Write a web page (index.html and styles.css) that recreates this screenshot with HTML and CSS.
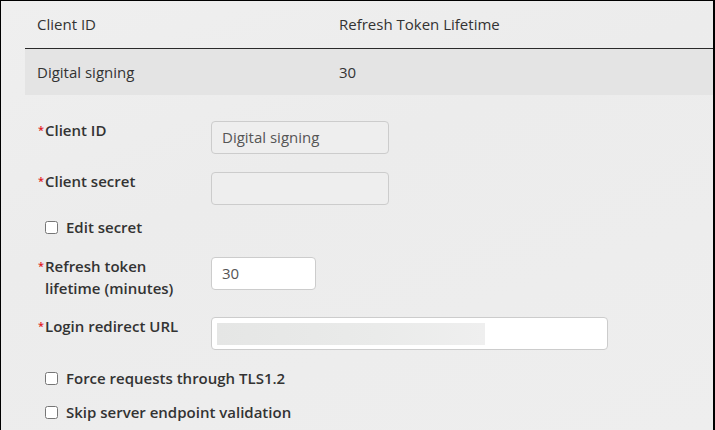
FILE: index.html
```
<!DOCTYPE html>
<html>
<head>
<meta charset="utf-8">
<link rel="stylesheet" href="styles.css">
</head>
<body>
<div class="frame">
  <div class="table">
    <div class="thead">
      <div class="col1">Client ID</div>
      <div class="col2">Refresh Token Lifetime</div>
    </div>
    <div class="trow">
      <div class="col1">Digital signing</div>
      <div class="col2">30</div>
    </div>
  </div>
  <form class="form">
    <div class="field f1">
      <label class="label"><span class="req">*</span>Client ID</label>
      <div class="input disabled w-md">Digital signing</div>
    </div>
    <div class="field f2">
      <label class="label"><span class="req">*</span>Client secret</label>
      <div class="input disabled w-md"></div>
    </div>
    <div class="check c1">
      <input type="checkbox" class="cb"><span>Edit secret</span>
    </div>
    <div class="field f3">
      <label class="label"><span class="req">*</span>Refresh token lifetime (minutes)</label>
      <div class="input w-sm">30</div>
    </div>
    <div class="field f4">
      <label class="label"><span class="req">*</span>Login redirect URL</label>
      <div class="input w-lg url"><span class="blur"></span></div>
    </div>
    <div class="check c2">
      <input type="checkbox" class="cb"><span>Force requests through TLS1.2</span>
    </div>
    <div class="check c3">
      <input type="checkbox" class="cb"><span>Skip server endpoint validation</span>
    </div>
  </form>
</div>
</body>
</html>
```
FILE: styles.css
```
* { box-sizing: border-box; }
html, body { margin: 0; padding: 0; }
body {
  font-family: "Open Sans", "Liberation Sans", sans-serif;
  font-size: 15px;
  color: #333;
  background: #eeeeee;
}
.frame {
  width: 715px;
  height: 430px;
  border-top: 1px solid #000;
  border-left: 1px solid #000;
  border-right: 2px solid #000;
  background: linear-gradient(160deg, #efefef 0%, #ececec 40%, #eeeeee 100%);
  overflow: hidden;
}
.table {
  margin-left: 24px;
}
.thead {
  display: flex;
  height: 48px;
  align-items: center;
  border-bottom: 1px solid #2a2a2a;
  padding-bottom: 1px;
}
.trow {
  display: flex;
  height: 46px;
  align-items: center;
  background: #e4e4e4;
}
.col1 { width: 314px; padding-left: 12px; }
.col2 { flex: 1; }
.form {
  padding: 26px 0 0 37px;
}
.field {
  display: flex;
  align-items: flex-start;
}
.label {
  width: 150px;
  margin-right: 23px;
  margin-top: -2px;
  line-height: 22px;
  font-size: 15px;
  font-weight: 600;
  color: #333;
  padding-left: 7px;
  text-indent: -7px;
}
.req {
  color: #e21b1b;
  font-size: 11px;
  display: inline-block;
  width: 7px;
  text-indent: 0;
  vertical-align: 2px;
}
.input {
  height: 33px;
  border: 1px solid #cccccc;
  border-radius: 4px;
  background: #fff;
  color: #555;
  padding: 0 10px;
  line-height: 31px;
  font-size: 15px;
}
.input.disabled { background: #eeeeee; }
.w-md { width: 178px; }
.w-sm { width: 105px; }
.w-lg { width: 397px; }
.url { display: flex; align-items: center; padding: 0 5px; }
.blur {
  display: block;
  width: 268px;
  height: 22px;
  background: linear-gradient(90deg, #e5e6e5 0%, #eaebea 60%, #efefef 100%);
}
.f1 { margin-bottom: 18px; }
.f2 { margin-bottom: 11px; }
.f3 { margin-bottom: 18px; height: 42px; }
.f4 { margin-bottom: 17px; }
.check {
  display: flex;
  align-items: center;
  height: 22px;
  padding-left: 7px;
  font-weight: 600;
  color: #333;
}
.c1 { margin-bottom: 19px; }
.c2 { margin-bottom: 12px; }
.cb {
  width: 13px;
  height: 13px;
  margin: 0 8px 0 0;
}
```
